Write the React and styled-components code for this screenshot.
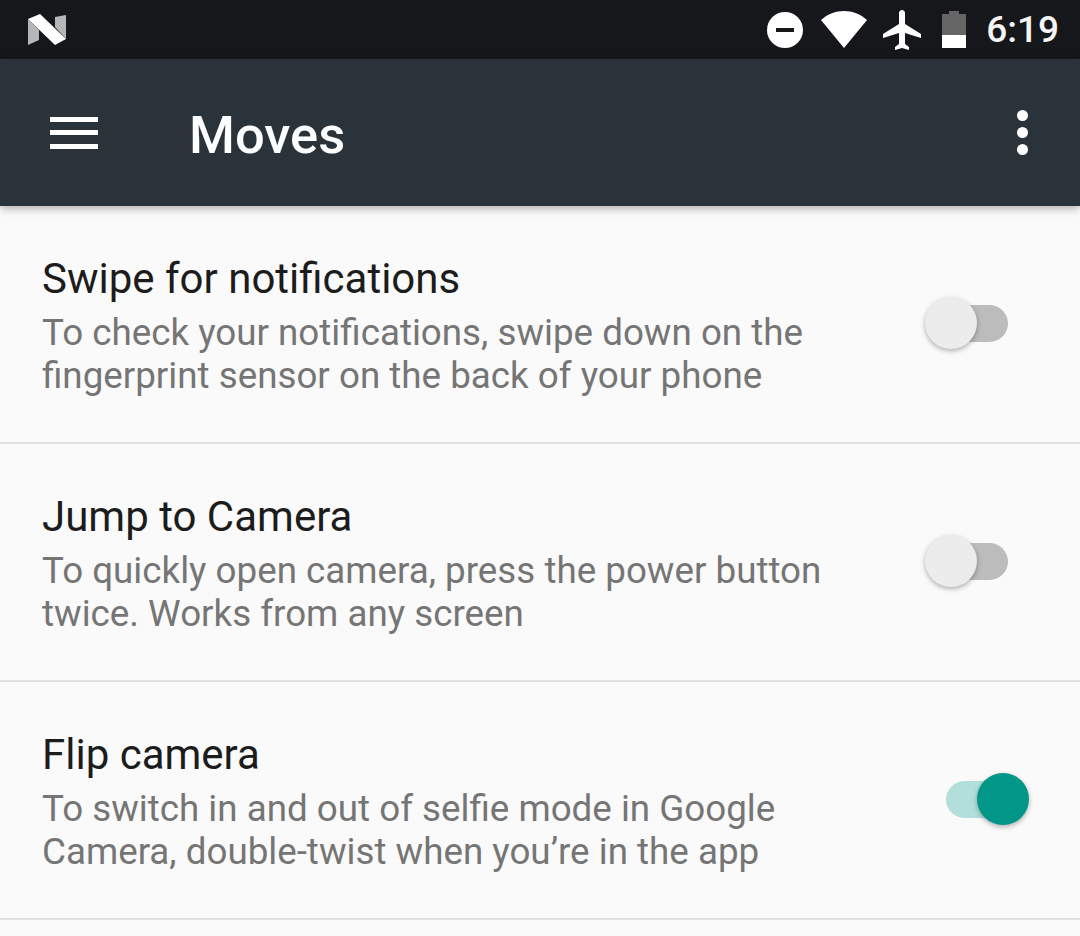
import React from "react";
import styled, { createGlobalStyle } from "styled-components";

const Global = createGlobalStyle`
  html, body { margin: 0; padding: 0; background: #fafafa; }
  body { font-family: Roboto, "Liberation Sans", sans-serif; }
`;
const Screen = styled.div`
  width: 1080px; height: 936px; overflow: hidden; background: #fafafa;
  display: flex; flex-direction: column;
`;
const StatusBar = styled.div`
  height: 59px; flex: none; background: #15171a; display: flex; align-items: center;
  padding: 0 21px 0 28px; box-sizing: border-box; color: #fff;
`;
const StatusIcons = styled.div`
  margin-left: auto; display: flex; align-items: center;
`;
const Gap = styled.span`
  display: block; flex: none; width: ${p => p.$w}px;
`;
const Clock = styled.span`
  font-size: 37px; font-weight: 500; color: #f5f5f5; line-height: 59px;
`;
const AppBar = styled.header`
  height: 147px; flex: none; background: #2a333a; display: flex; align-items: center;
  padding: 0 50px; box-sizing: border-box; color: #fff; position: relative;
  box-shadow: 0 3px 8px rgba(0,0,0,.28);
`;
const Title = styled.h1`
  margin: 5px 0 0 91px; font-size: 52.5px; font-weight: 500; line-height: 1; color: #fbfdfe;
`;
const MoreButton = styled.div`
  margin-left: auto; display: flex; flex-direction: column; gap: 6px; margin-right: 2px;
`;
const Dot = styled.span`
  width: 11px; height: 11px; border-radius: 50%; background: #fff; display: block;
`;
const Row = styled.div`
  flex: none; box-sizing: border-box; display: flex; align-items: flex-start;
  padding: 49px 51px 0 42px; border-bottom: 2px solid #dfe0e0; height: 238px;
  &:first-of-type { height: 237px; }
`;
const RowText = styled.div`
  flex: 1; min-width: 0;
`;
const RowTitle = styled.div`
  font-size: 42px; line-height: 47px; color: #1c1c1c;
`;
const RowSub = styled.div`
  font-size: 36.75px; line-height: 43px; color: #757575; margin-top: 9px; white-space: pre-line;
`;
const Switch = styled.div`
  width: 104px; height: 56px; position: relative; flex: none; margin-top: 41px;
`;
const Track = styled.div`
  position: absolute; left: 21px; top: 9px; width: 62px; height: 37px; border-radius: 19px;
  background: ${p => (p.$on ? "#b2dfdb" : "#bcbcbc")};
`;
const Thumb = styled.div`
  position: absolute; top: 1px; left: ${p => (p.$on ? "52px" : "0")};
  width: 52px; height: 52px; border-radius: 50%;
  background: ${p => (p.$on ? "#009688" : "#ececec")};
  box-shadow: 0 2px 5px rgba(0,0,0,.3);
`;

const NLogo = () => (
  <svg width="40" height="34" viewBox="0 0 40 34">
    <path d="M0 6 L0 32 L11 27 L11 17 Z" fill="#b5b6b8" />
    <path d="M27 4 L38 2 L38 26 L27 14 Z" fill="#b5b6b8" />
    <path d="M0 6 L12 1 L38 26 L27 32 Z" fill="#fff" />
  </svg>
);
const DndIcon = () => (
  <svg width="36" height="36" viewBox="0 0 36 36">
    <circle cx="18" cy="18" r="18" fill="#fff" />
    <rect x="9" y="16" width="18" height="4" fill="#15171a" />
  </svg>
);
const WifiIcon = () => (
  <svg width="46" height="37" viewBox="0 0 46 37">
    <path d="M0 9 C13 -3 33 -3 46 9 L23 37 Z" fill="#fff" />
  </svg>
);
const PlaneIcon = () => (
  <svg width="38" height="40" viewBox="2 2 19 20">
    <path fill="#fff" d="M21 16v-2l-8-5V3.5C13 2.67 12.33 2 11.5 2S10 2.67 10 3.5V9l-8 5v2l8-2.5V19l-2 1.5V22l3.5-1 3.5 1v-1.5L13 19v-5.5l8 2.5z" />
  </svg>
);
const BatteryIcon = () => (
  <svg width="24" height="38" viewBox="0 0 24 38">
    <path d="M7 0 H17 V3 H24 V37 H0 V3 H7 Z" fill="#666" />
    <rect x="0" y="24" width="24" height="13" fill="#fff" />
  </svg>
);
const Menu = () => (
  <svg width="48" height="32" viewBox="0 0 48 32">
    <rect y="0" width="48" height="5" fill="#fff" />
    <rect y="13" width="48" height="5" fill="#fff" />
    <rect y="27" width="48" height="5" fill="#fff" />
  </svg>
);

const items = [
  { t: "Swipe for notifications", s: "To check your notifications, swipe down on the\nfingerprint sensor on the back of your phone", on: false },
  { t: "Jump to Camera", s: "To quickly open camera, press the power button\ntwice. Works from any screen", on: false },
  { t: "Flip camera", s: "To switch in and out of selfie mode in Google\nCamera, double-twist when you’re in the app", on: true },
];

export default function App() {
  return (
    <Screen>
      <Global />
      <StatusBar>
        <NLogo />
        <StatusIcons>
          <DndIcon />
          <Gap $w={18} />
          <WifiIcon />
          <Gap $w={16} />
          <PlaneIcon />
          <Gap $w={21} />
          <BatteryIcon />
          <Gap $w={20} />
          <Clock>6:19</Clock>
        </StatusIcons>
      </StatusBar>
      <AppBar>
        <Menu />
        <Title>Moves</Title>
        <MoreButton><Dot /><Dot /><Dot /></MoreButton>
      </AppBar>
      {items.map(i => (
        <Row key={i.t}>
          <RowText>
            <RowTitle>{i.t}</RowTitle>
            <RowSub>{i.s}</RowSub>
          </RowText>
          <Switch>
            <Track $on={i.on} />
            <Thumb $on={i.on} />
          </Switch>
        </Row>
      ))}
    </Screen>
  );
}
